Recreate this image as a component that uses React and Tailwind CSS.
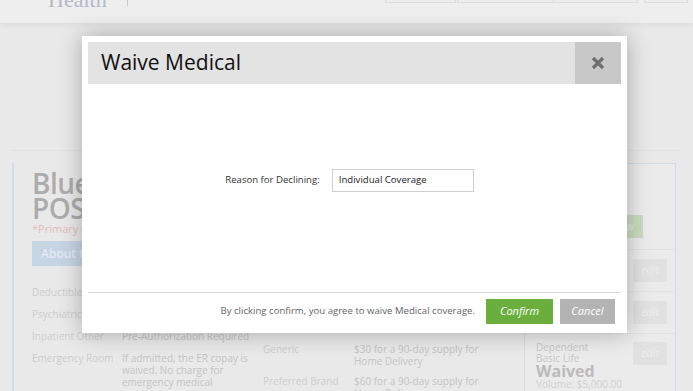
import React from 'react';

const rows = [
  { label: 'Deductible' },
  { label: 'Psychiatric' },
  { label: 'Inpatient Other', value: 'Pre-Authorization Required' },
];

function LeftCard() {
  return (
    <div className="w-[490px] border-l-2 border-[#d3dce6] pl-[18px] pt-[8px]">
      <div className="text-[28px] font-semibold leading-[25px] tracking-[-0.5px] text-[#acacac]">Blue Cross</div>
      <div className="text-[28px] font-semibold leading-[25px] tracking-[-0.5px] text-[#acacac]">POS</div>
      <div className="mt-[1px] text-[11px] leading-[14px] text-[#e4bcbf]">*Primary Care Physician Required</div>
      <div className="mt-[5px] flex h-[25px] w-[140px] items-center bg-[#c6d5e4] px-[9px] text-[12px] font-semibold text-[#e3ebf3]">
        About the Plan
      </div>
      <div className="mt-[20px] flex flex-col gap-[8px] text-[10px] leading-[12px] text-[#cdcdcd]">
        {rows.map(r => (
          <div key={r.label} className="flex h-[14px]">
            <div className="w-[90px]">{r.label}</div>
            <div className="text-[#c4c4c4]">{r.value}</div>
          </div>
        ))}
        <div className="flex">
          <div className="w-[90px]">Emergency Room</div>
          <div className="w-[141px] pr-[12px] text-[#c4c4c4]">
            If admitted, the ER copay is waived. No charge for emergency medical services
          </div>
          <div className="flex flex-col">
            <div className="mt-[-9px] flex">
              <div className="w-[91px]">Generic</div>
              <div className="w-[130px] text-[#c4c4c4]">$30 for a 90-day supply for Home Delivery</div>
            </div>
            <div className="mt-[8px] flex">
              <div className="w-[91px]">Preferred Brand</div>
              <div className="w-[130px] text-[#c4c4c4]">$60 for a 90-day supply for Home Delivery</div>
            </div>
          </div>
        </div>
      </div>
    </div>
  );
}

function EditButton() {
  return (
    <div className="flex h-[23px] w-[34px] items-center justify-center bg-[#e1e1e1] text-[11px] italic text-[#eeeeee]">edit</div>
  );
}

function RightCard() {
  return (
    <div className="ml-[22px] w-[152px] border border-[#d0dbe6] bg-[#ebebeb]">
      <div className="flex h-[85px] items-end justify-end pb-[11px] pr-[32px]">
        <div className="flex h-[23px] w-[50px] items-center justify-end bg-[#c9dcc0] pr-[9px] text-[12px] italic text-[#dfeada]">
          View
        </div>
      </div>
      <div className="flex h-[42px] items-center justify-end border-t border-[#e2e2e2] px-[8px]">
        <EditButton />
      </div>
      <div className="flex h-[42px] items-center justify-end border-t border-[#e2e2e2] px-[8px]">
        <EditButton />
      </div>
      <div className="flex h-[60px] items-start justify-between border-t border-[#e2e2e2] pl-[11px] pr-[8px] pt-[8px]">
        <div className="leading-[11px]">
          <div className="text-[10px] text-[#c8c8c8]">Dependent</div>
          <div className="text-[10px] text-[#c8c8c8]">Basic Life</div>
          <div className="text-[16px] font-bold leading-[15px] text-[#bbbbbb]">Waived</div>
          <div className="text-[10px] text-[#d0d0d0]">Volume: $5,000.00</div>
        </div>
        <EditButton />
      </div>
    </div>
  );
}

function Modal() {
  return (
    <div className="absolute left-[82px] top-[36px] flex h-[297px] w-[545px] flex-col bg-white p-[6px] shadow-[0_0_22px_rgba(0,0,0,0.28)]">
      <div className="flex h-[42px] bg-[#e3e3e3]">
        <div className="flex flex-1 items-center pl-[13px] text-[21px] text-[#111111]">Waive Medical</div>
        <button className="flex w-[46px] items-center justify-center bg-[#c8c8c8]">
          <svg width="14" height="14" viewBox="0 0 14 14">
            <path d="M2 2 L12 12 M12 2 L2 12" stroke="#6e6e6e" strokeWidth="3.2" strokeLinecap="butt" />
          </svg>
        </button>
      </div>
      <div className="flex flex-1 items-start justify-center pr-[10px] pt-[85px]">
        <div className="flex items-center">
          <label className="text-[9.6px] text-[#333333]">Reason for Declining:</label>
          <div className="ml-[12px] flex h-[23px] w-[142px] items-center border border-[#cfcfcf] px-[6px] text-[9.6px] text-[#222222]">
            Individual Coverage
          </div>
        </div>
      </div>
      <div className="flex h-[35px] items-start justify-end border-t border-[#dcdcdc] pr-[6px] pt-[6px]">
        <div className="mr-[11px] flex h-[25px] items-center text-[9.6px] text-[#666666]">
          By clicking confirm, you agree to waive Medical coverage.
        </div>
        <button className="h-[25px] w-[67px] bg-[#6aaf3e] text-[11px] italic text-white">Confirm</button>
        <button className="ml-[7px] h-[25px] w-[55px] bg-[#b3b3b3] text-[11px] italic text-white">Cancel</button>
      </div>
    </div>
  );
}

export default function App() {
  return (
    <div className="relative h-[391px] w-[693px] overflow-hidden bg-[#e9e9e9] font-['Open_Sans',sans-serif]">
      <div className="flex h-[23px] items-start bg-[#eeeeee] shadow-[0_2px_6px_rgba(0,0,0,0.06)]">
        <div className="ml-[48px] mt-[-17px] font-['Liberation_Serif',serif] text-[22px] text-[#b4b8c9]">Health</div>
        <div className="ml-[20px] h-[6px] w-px bg-[#c6c8d2]" />
        <div className="ml-auto flex h-[3px] gap-[1px]">
          <div className="w-[71px] border-x border-b border-[#dedede]" />
          <div className="w-[96px] border-x border-b border-[#dedede]" />
          <div className="w-[84px] border-x border-b border-[#dedede]" />
        </div>
        <div className="ml-[6px] mr-[5px] h-[3px] w-[44px] border-x border-b border-[#dedede]" />
      </div>
      <div className="mx-[12px] mt-[127px] border-t border-[#e1e1e1]" />
      <div className="flex px-[12px] pt-[12px]">
        <LeftCard />
        <RightCard />
      </div>
      <Modal />
    </div>
  );
}
